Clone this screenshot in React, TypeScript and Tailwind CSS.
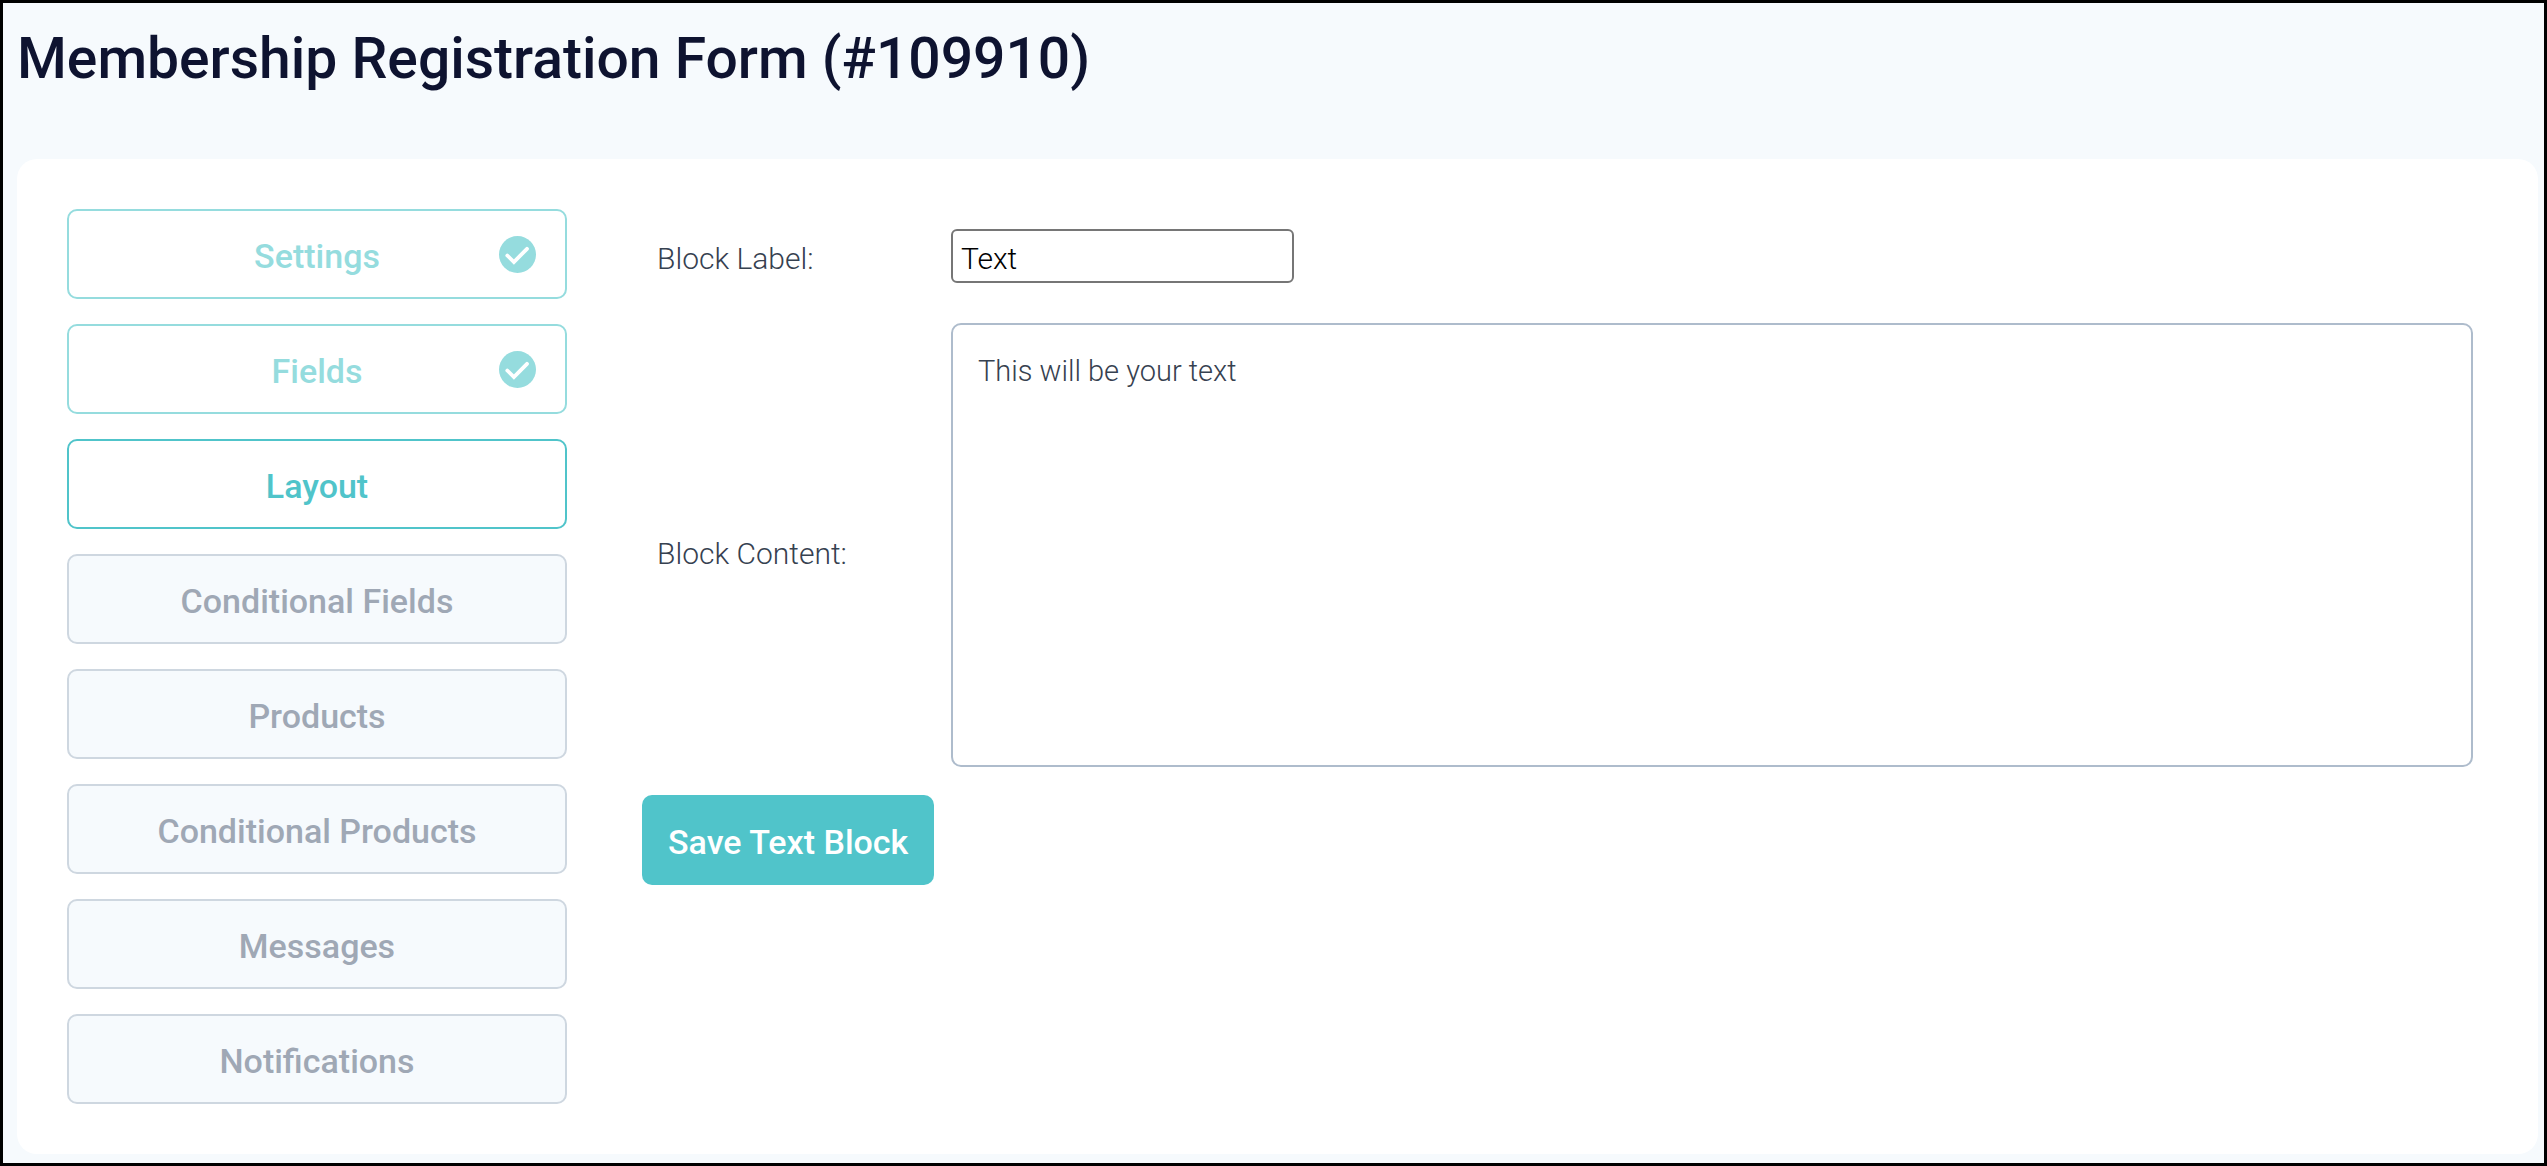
import { useState } from "react";

type StepState = "done" | "current" | "pending";

type Step = {
  label: string;
  state: StepState;
};

const steps: Step[] = [
  { label: "Settings", state: "done" },
  { label: "Fields", state: "done" },
  { label: "Layout", state: "current" },
  { label: "Conditional Fields", state: "pending" },
  { label: "Products", state: "pending" },
  { label: "Conditional Products", state: "pending" },
  { label: "Messages", state: "pending" },
  { label: "Notifications", state: "pending" },
];

const stepClasses: Record<StepState, string> = {
  done: "border-[#95dcde] bg-white text-[#95dcde]",
  current: "border-[#50c4ca] bg-white text-[#50c4ca]",
  pending: "border-[#ced7e0] bg-[#f6fafd] text-[#9fa8b5]",
};

function CheckIcon() {
  return (
    <svg viewBox="0 0 37 37" className="size-[37px]" aria-hidden>
      <circle cx="18.5" cy="18.5" r="18.5" fill="currentColor" />
      <path
        d="M8.3 19.5L14.9 26L28 12.8"
        fill="none"
        stroke="#fff"
        strokeWidth="3.8"
        strokeLinecap="round"
      />
    </svg>
  );
}

function StepButton({ step }: { step: Step }) {
  return (
    <button
      type="button"
      aria-current={step.state === "current" ? "step" : undefined}
      className={`grid h-[90px] w-full grid-cols-[1fr_auto_1fr] items-center rounded-[10px] border-2 px-[29px] text-[34px] font-medium ${stepClasses[step.state]}`}
    >
      <span className="col-start-2 pt-1">{step.label}</span>
      {step.state === "done" && (
        <span className="justify-self-end">
          <CheckIcon />
        </span>
      )}
    </button>
  );
}

export default function App() {
  const [label, setLabel] = useState("Text");
  const [content, setContent] = useState("This will be your text");

  return (
    <div className="flex min-h-screen flex-col border-3 border-black bg-[#f6fafd] pr-1.5 pb-[9px] pl-3.5 font-[Roboto,sans-serif]">
      <h1 className="pt-5 text-[57px] leading-[72px] font-medium text-[#0e1330]">
        Membership Registration Form (#109910)
      </h1>

      <main className="mt-16 flex flex-1 items-start gap-[75px] rounded-[20px] bg-white py-[50px] pr-[65px] pl-[50px]">
        <nav aria-label="Form steps" className="w-[500px] shrink-0">
          <ul className="flex flex-col gap-[25px]">
            {steps.map((step) => (
              <li key={step.label}>
                <StepButton step={step} />
              </li>
            ))}
          </ul>
        </nav>

        <form
          className="min-w-0 flex-1 pt-5"
          onSubmit={(e) => e.preventDefault()}
        >
          <div className="grid grid-cols-[293px_1fr] items-center gap-x-4 gap-y-10 text-[30px] font-light text-[#364150]">
            <label htmlFor="block-label" className="pt-1 pl-[15px]">
              Block Label:
            </label>
            <input
              id="block-label"
              type="text"
              value={label}
              onChange={(e) => setLabel(e.target.value)}
              className="h-[54px] w-[343px] rounded-md border-2 border-[#767676] bg-white px-2 pt-1 text-[30px] text-black"
            />
            <label htmlFor="block-content" className="pt-4 pl-[15px]">
              Block Content:
            </label>
            <textarea
              id="block-content"
              value={content}
              onChange={(e) => setContent(e.target.value)}
              className="block h-[444px] w-full resize-none rounded-[10px] border-2 border-[#aebccc] bg-white px-[25px] py-[25px] text-[29px]"
            />
          </div>
          <button
            type="submit"
            className="mt-7 h-[90px] rounded-[10px] bg-[#50c4ca] px-[26px] pt-1 text-[34px] font-medium text-white"
          >
            Save Text Block
          </button>
        </form>
      </main>
    </div>
  );
}
